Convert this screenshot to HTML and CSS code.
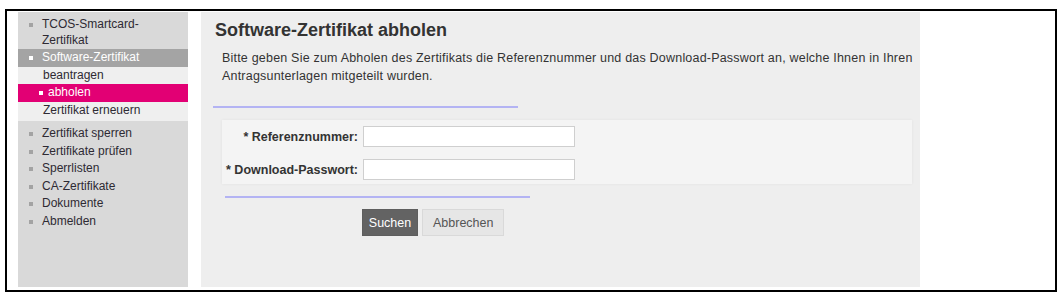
FILE: index.html
```html
<!DOCTYPE html>
<html lang="de">
<head>
    <meta charset="UTF-8">
    <title>Software-Zertifikat abholen</title>
    <link rel="stylesheet" href="styles.css">
</head>
<body>
    <div class="frame">
        <div class="sidebar">
            <div class="nav-item"><span class="bullet"></span><span>TCOS-Smartcard-<br>Zertifikat</span></div>
            <div class="nav-item open"><span class="bullet"></span><span>Software-Zertifikat</span></div>
            <div class="subnav">
                <div class="sub-item">beantragen</div>
                <div class="sub-item active"><span class="bullet"></span><span>abholen</span></div>
                <div class="sub-item">Zertifikat erneuern</div>
            </div>
            <div class="nav-item spaced"><span class="bullet"></span><span>Zertifikat sperren</span></div>
            <div class="nav-item"><span class="bullet"></span><span>Zertifikate prüfen</span></div>
            <div class="nav-item"><span class="bullet"></span><span>Sperrlisten</span></div>
            <div class="nav-item"><span class="bullet"></span><span>CA-Zertifikate</span></div>
            <div class="nav-item"><span class="bullet"></span><span>Dokumente</span></div>
            <div class="nav-item"><span class="bullet"></span><span>Abmelden</span></div>
        </div>

        <div class="main">
            <h1>Software-Zertifikat abholen</h1>
            <p class="intro">Bitte geben Sie zum Abholen des Zertifikats die Referenznummer und das Download-Passwort an, welche Ihnen in Ihren Antragsunterlagen mitgeteilt wurden.</p>
            <div class="divider"></div>

            <div class="form-box">
                <div class="form-row">
                    <label class="label" for="ref">* Referenznummer:</label>
                    <input class="field" id="ref" type="text">
                </div>
                <div class="form-row">
                    <label class="label" for="pw">* Download-Passwort:</label>
                    <input class="field" id="pw" type="password">
                </div>
            </div>
            <div class="divider second"></div>

            <div class="buttons">
                <button class="btn primary">Suchen</button>
                <button class="btn">Abbrechen</button>
            </div>
        </div>
    </div>
</body>
</html>
```

FILE: styles.css
```css
body {
    margin: 0;
    font-family: "Liberation Sans", Arial, sans-serif;
    font-size: 12px;
    color: #333;
    background: white;
}
.frame {
    display: flex;
    gap: 13px;
    width: 1037px;
    height: 275px;
    margin: 9px 0 0 5px;
    padding: 1px 0 3px 11px;
    border: 2px solid #000;
}
.sidebar {
    width: 170px;
    flex-shrink: 0;
    background: #d9d9d9;
    padding-top: 4px;
}
.nav-item {
    display: flex;
    align-items: flex-start;
    padding: 1px 0 1px 11px;
    line-height: 15.5px;
    color: #2e2a33;
}
.nav-item .bullet {
    width: 4px;
    height: 4px;
    margin: 6px 9px 0 0;
    flex-shrink: 0;
    background: #a3a3a3;
}
.nav-item.open {
    background: #a4a4a4;
    color: white;
}
.nav-item.open .bullet {
    background: white;
}
.nav-item.spaced {
    margin-top: 4px;
}
.subnav {
    background: #efefef;
    padding-bottom: 2px;
}
.sub-item {
    display: flex;
    padding: 1px 0 1px 25px;
    line-height: 15.5px;
    color: #2e2a33;
}
.sub-item.active {
    background: #e20074;
    color: white;
    padding-left: 21px;
}
.sub-item .bullet {
    width: 4px;
    height: 4px;
    margin: 6px 5px 0 0;
    background: white;
}
.main {
    width: 695px;
    flex-shrink: 0;
    background: #eeeeee;
    padding: 8px 12px 0 12px;
}
h1 {
    margin: 0 0 9px 2px;
    font-size: 18px;
    line-height: 20px;
    color: #333;
}
.intro {
    margin: 0 0 21px 9px;
    width: 692px;
    font-size: 12.5px;
    letter-spacing: 0.2px;
    line-height: 18px;
}
.divider {
    width: 305px;
    height: 2px;
    background: #b3b3f3;
}
.divider.second {
    margin-left: 12px;
}
.form-box {
    display: flex;
    flex-direction: column;
    gap: 12px;
    width: 690px;
    margin: 12px 0 12px 9px;
    padding: 6px 0 4px 0;
    background: #f4f4f4;
    box-shadow: 0 0 3px rgba(0, 0, 0, 0.06);
}
.form-row {
    display: flex;
    align-items: center;
    height: 21px;
}
.label {
    width: 136px;
    margin-right: 5px;
    text-align: right;
    font-weight: bold;
    font-size: 12.5px;
    color: #333;
}
.field {
    width: 212px;
    height: 21px;
    box-sizing: border-box;
    border: 1px solid #cfcfcf;
    background: white;
    margin: 0;
}
.buttons {
    display: flex;
    gap: 4px;
    margin: 11px 0 0 149px;
}
.btn {
    height: 27px;
    padding: 0 10px;
    border: 1px solid #d9d9d9;
    background: #e6e6e6;
    color: #555;
    font-family: "Liberation Sans", Arial, sans-serif;
    font-size: 12.5px;
}
.btn.primary {
    width: 56px;
    padding: 0;
    border-color: #5e5e5e;
    background: #636363;
    color: white;
}
```
